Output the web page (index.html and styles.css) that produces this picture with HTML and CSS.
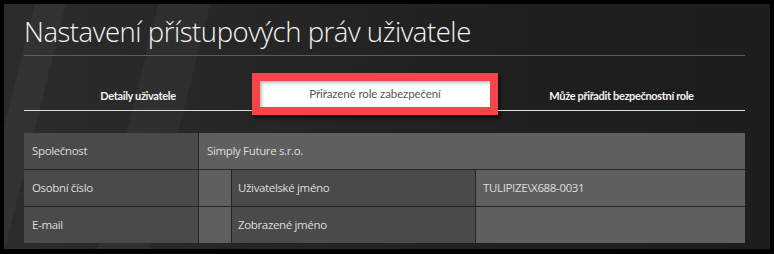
FILE: index.html
```html
<!DOCTYPE html>
<html lang="cs">
<head>
<meta charset="utf-8">
<title>Nastavení přístupových práv uživatele</title>
<link rel="stylesheet" href="styles.css">
</head>
<body>
<div class="panel">
  <h1 class="title">Nastavení přístupových práv uživatele</h1>
  <div class="tabs">
    <div class="tab tab-first">Detaily uživatele</div>
    <div class="tab tab-active"><span class="tab-inner">Přiřazené role zabezpečení</span></div>
    <div class="tab tab-last">Může přiřadit bezpečnostní role</div>
  </div>
  <div class="grid">
    <div class="cell label">Společnost</div>
    <div class="cell value span3">Simply Future s.r.o.</div>
    <div class="cell label">Osobní číslo</div>
    <div class="cell value"></div>
    <div class="cell label">Uživatelské jméno</div>
    <div class="cell value">TULIPIZE\X688-0031</div>
    <div class="cell label">E-mail</div>
    <div class="cell value"></div>
    <div class="cell label">Zobrazené jméno</div>
    <div class="cell value"></div>
  </div>
</div>
</body>
</html>
```

FILE: styles.css
```css
html, body {
  margin: 0;
  padding: 0;
  background: #000;
}
body {
  width: 774px;
  height: 254px;
  overflow: hidden;
  font-family: "Open Sans", "Noto Sans", sans-serif;
}
.panel {
  margin: 4px;
  width: 766px;
  height: 245px;
  box-sizing: border-box;
  padding: 0 25px 0 20px;
  background:
    linear-gradient(104deg, transparent 0 30px, rgba(255,255,255,0.035) 30px 60px, transparent 60px 150px, rgba(255,255,255,0.03) 150px 200px, transparent 200px),
    linear-gradient(to right, #2c2c2c 0, #262626 250px, #1f1f1f 520px, #1d1d1d 100%);
}
.title {
  margin: 0;
  padding-top: 10px;
  height: 41px;
  border-bottom: 1px solid #5c5c5c;
  font-weight: 300;
  font-size: 27.5px;
  line-height: 36px;
  color: #f4f4f4;
  letter-spacing: -0.45px;
}
.tabs {
  display: flex;
  align-items: flex-start;
  margin-top: 17px;
  height: 42px;
}
.tab {
  font-family: "Lato", "Open Sans", sans-serif;
  font-size: 11px;
  font-weight: 700;
  letter-spacing: -0.35px;
  color: #f2f2f2;
  text-align: center;
  height: 38px;
  padding-top: 15px;
  line-height: 16px;
  box-sizing: border-box;
  border-bottom: 1px solid #dcdcdc;
}
.tab-first { width: 228px; }
.tab-last { flex: 1; }
.tab-active {
  width: 246px;
  height: 42px;
  padding-top: 0;
  border: 8px solid #f7434a;
  background: #fff;
  box-shadow: 2px 3px 4px rgba(0,0,0,0.55);
  font-size: 11.5px;
  font-weight: 400;
  letter-spacing: -0.1px;
  color: #555;
  line-height: 26px;
}
.tab-inner {
  display: block;
  height: 26px;
  box-shadow: inset 3px 3px 3px -1px rgba(0,0,0,0.25);
}
.grid {
  margin-top: 18px;
  display: grid;
  grid-template-columns: 174px 32px 243px 1fr;
  grid-auto-rows: 36px;
  gap: 1px;
  background: #232323;
}
.cell {
  font-size: 11.5px;
  letter-spacing: -0.35px;
  color: #dedede;
  line-height: 36px;
  padding-left: 8px;
  white-space: nowrap;
}
.label { background: #4a4a4a; }
.value { background: #5f5f5f; }
.span3 { grid-column: 2 / 5; }
.grid .label:nth-child(5), .grid .label:nth-child(9) { padding-left: 6px; }
.grid .value:nth-child(6) { padding-left: 7px; }
```
